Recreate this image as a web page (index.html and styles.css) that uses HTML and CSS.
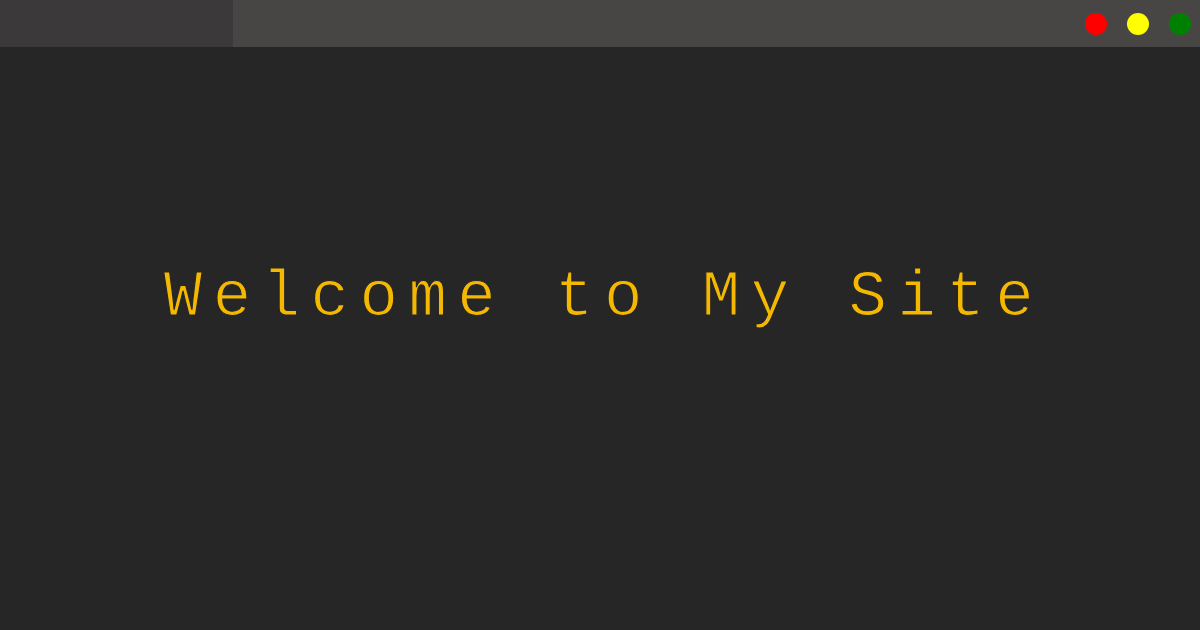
FILE: index.html
```html
<!DOCTYPE html>
<html>
<head>
<meta charset="utf-8">
<link rel="stylesheet" href="styles.css">
</head>
<body>
<header class="bar">
  <div class="tab"></div>
  <div class="dots">
    <span class="dot red"></span>
    <span class="dot yellow"></span>
    <span class="dot green"></span>
  </div>
</header>
<main class="main">
  <h1 class="title">Welcome to My Site</h1>
</main>
</body>
</html>
```
FILE: styles.css
```css
html, body { margin: 0; padding: 0; }
body {
  width: 1200px;
  height: 630px;
  background: #262626;
  overflow: hidden;
  display: flex;
  flex-direction: column;
}
.bar {
  height: 47px;
  background: #474644;
  display: flex;
  justify-content: space-between;
  align-items: center;
}
.tab {
  width: 233px;
  height: 100%;
  background: #3b393a;
}
.dots {
  display: flex;
  gap: 20px;
  padding-right: 9px;
}
.dot {
  width: 22px;
  height: 22px;
  border-radius: 50%;
}
.red { background: #ff0000; }
.yellow { background: #ffff00; }
.green { background: #008000; }
.main {
  flex: 1;
  display: flex;
  justify-content: center;
  padding-top: 215px;
}
.title {
  margin: 0;
  font-family: "Liberation Mono", monospace;
  font-weight: normal;
  font-size: 64px;
  letter-spacing: 10.5px;
  color: #f5b800;
  line-height: 72px;
  height: 72px;
  padding-left: 8px;
  -webkit-text-stroke: 1.2px #262626;
  paint-order: normal;
}
```
